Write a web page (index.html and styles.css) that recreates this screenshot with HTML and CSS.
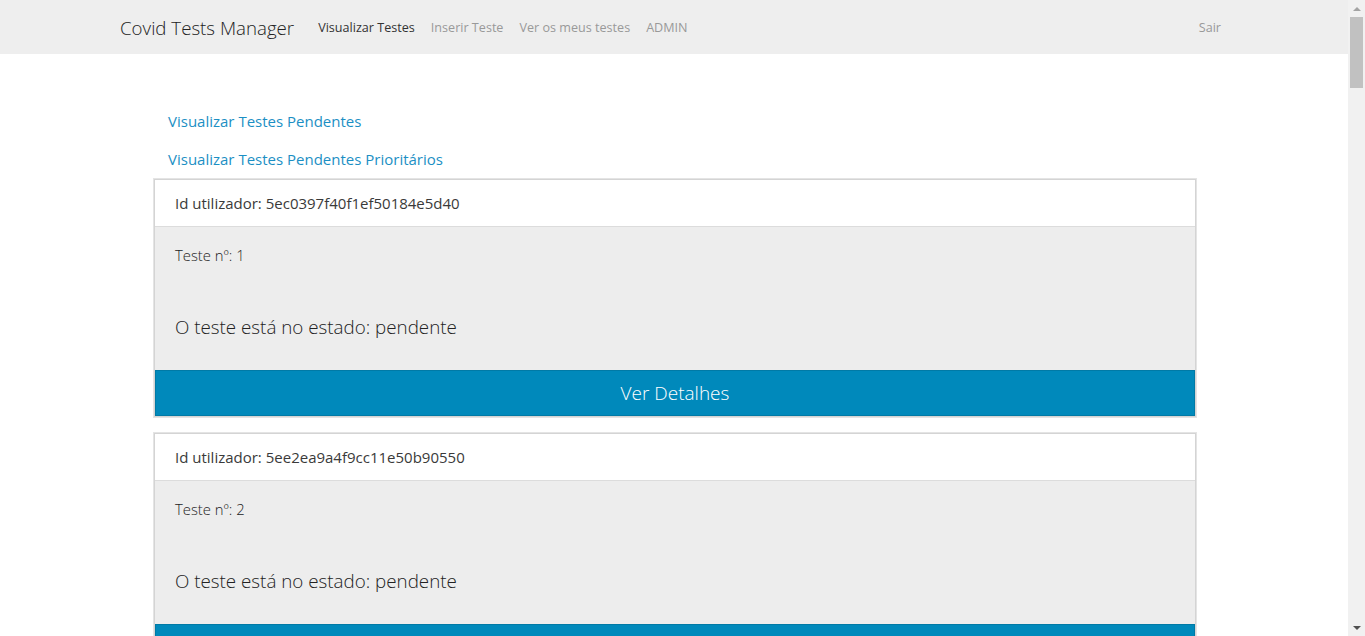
FILE: index.html
```html
<!DOCTYPE html>
<html lang="pt">
<head>
<meta charset="utf-8">
<title>Covid Tests Manager</title>
<link rel="stylesheet" href="styles.css">
</head>
<body>
<div class="page">
  <nav class="navbar">
    <div class="container nav-inner">
      <a class="brand" href="#">Covid Tests Manager</a>
      <ul class="nav-links">
        <li><a class="nav-link active" href="#">Visualizar Testes</a></li>
        <li><a class="nav-link" href="#">Inserir Teste</a></li>
        <li><a class="nav-link" href="#">Ver os meus testes</a></li>
        <li><a class="nav-link" href="#">ADMIN</a></li>
      </ul>
      <ul class="nav-links nav-right">
        <li><a class="nav-link" href="#">Sair</a></li>
      </ul>
    </div>
  </nav>
  <main class="container main">
    <div class="content">
      <div class="filters">
        <a class="filter-link" href="#">Visualizar Testes Pendentes</a>
        <a class="filter-link" href="#">Visualizar Testes Pendentes Prioritários</a>
      </div>
      <div class="card">
        <div class="card-header">Id utilizador: 5ec0397f40f1ef50184e5d40</div>
        <div class="card-body">
          <p class="test-no">Teste nº: 1</p>
          <p class="state">O teste está no estado: pendente</p>
        </div>
        <a class="btn-details" href="#">Ver Detalhes</a>
      </div>
      <div class="card">
        <div class="card-header">Id utilizador: 5ee2ea9a4f9cc11e50b90550</div>
        <div class="card-body">
          <p class="test-no">Teste nº: 2</p>
          <p class="state">O teste está no estado: pendente</p>
        </div>
        <a class="btn-details" href="#">Ver Detalhes</a>
      </div>
    </div>
  </main>
</div>
<div class="scrollbar" aria-hidden="true">
  <div class="sb-arrow sb-up"></div>
  <div class="sb-thumb"></div>
  <div class="sb-track"></div>
  <div class="sb-arrow sb-down"></div>
</div>
</body>
</html>
```

FILE: styles.css
```css
* { box-sizing: border-box; }
html, body { margin: 0; padding: 0; }
body {
  font-family: "Open Sans", "Noto Sans", sans-serif;
  color: #333;
  background: #fff;
  display: flex;
  height: 100vh;
  overflow: hidden;
}
a { text-decoration: none; }
.page {
  flex: 1;
  min-width: 0;
  height: 100%;
  overflow: hidden;
}
.scrollbar {
  width: 17px;
  flex: none;
  background: #f1f1f1;
  display: flex;
  flex-direction: column;
  align-items: center;
}
.sb-arrow {
  height: 17px;
  width: 17px;
  display: flex;
  align-items: center;
  justify-content: center;
}
.sb-up::before {
  content: "";
  border-left: 4px solid transparent;
  border-right: 4px solid transparent;
  border-bottom: 4px solid #a3a3a3;
}
.sb-down::before {
  content: "";
  border-left: 4px solid transparent;
  border-right: 4px solid transparent;
  border-top: 4px solid #505050;
}
.sb-thumb {
  width: 13px;
  height: 71px;
  background: #c1c1c1;
}
.sb-track { flex: 1; }
.container {
  width: 1140px;
  margin: 0 auto;
  padding: 0 15px;
}
.navbar {
  background: #eeeeee;
  height: 54px;
}
.nav-inner {
  display: flex;
  align-items: center;
  height: 54px;
}
.brand {
  font-size: 18.7px;
  font-weight: 300;
  color: #222;
  margin-right: 16px;
  padding: 4px 0;
  margin-left: 1px;
}
.nav-links {
  list-style: none;
  display: flex;
  margin: 0;
  padding: 0;
}
.nav-right { margin-left: auto; }
.nav-link {
  display: block;
  padding: 8px;
  font-size: 12.6px;
  color: #999;
}
.nav-link.active { color: #333; }
.main { padding-top: 56px; }
.content { padding: 0 33px 0 34px; }
.filters {
  display: flex;
  flex-direction: column;
  align-items: flex-start;
  padding-left: 15px;
}
.filter-link {
  font-size: 15px;
  color: #1c8fc4;
  line-height: 22px;
  margin-bottom: 16px;
}
.filter-link:last-child { margin-bottom: 8px; }
.card {
  border: 1px solid #d4d4d4;
  box-shadow: 0 0 0 1px #e4e4e4;
  margin: 1px 0 16px 1px;
  background: #ededed;
}
.card-header {
  background: #fff;
  height: 47px;
  padding: 0 20px;
  display: flex;
  align-items: center;
  font-size: 15px;
  color: #3a3a3a;
  border-bottom: 1px solid #dcdcdc;
}
.card-body {
  padding: 17px 20px 0;
  height: 143px;
}
.test-no {
  margin: 0;
  font-size: 14.8px;
  font-weight: 300;
  color: #222;
  line-height: 22px;
}
.state {
  margin: 47px 0 0;
  font-size: 18.8px;
  font-weight: 300;
  color: #222;
  line-height: 28px;
}
.btn-details {
  display: flex;
  align-items: center;
  justify-content: center;
  height: 46px;
  background: #0089bb;
  border: 1px solid #007aa6;
  color: #fff;
  font-size: 19px;
  font-weight: 300;
}
```
